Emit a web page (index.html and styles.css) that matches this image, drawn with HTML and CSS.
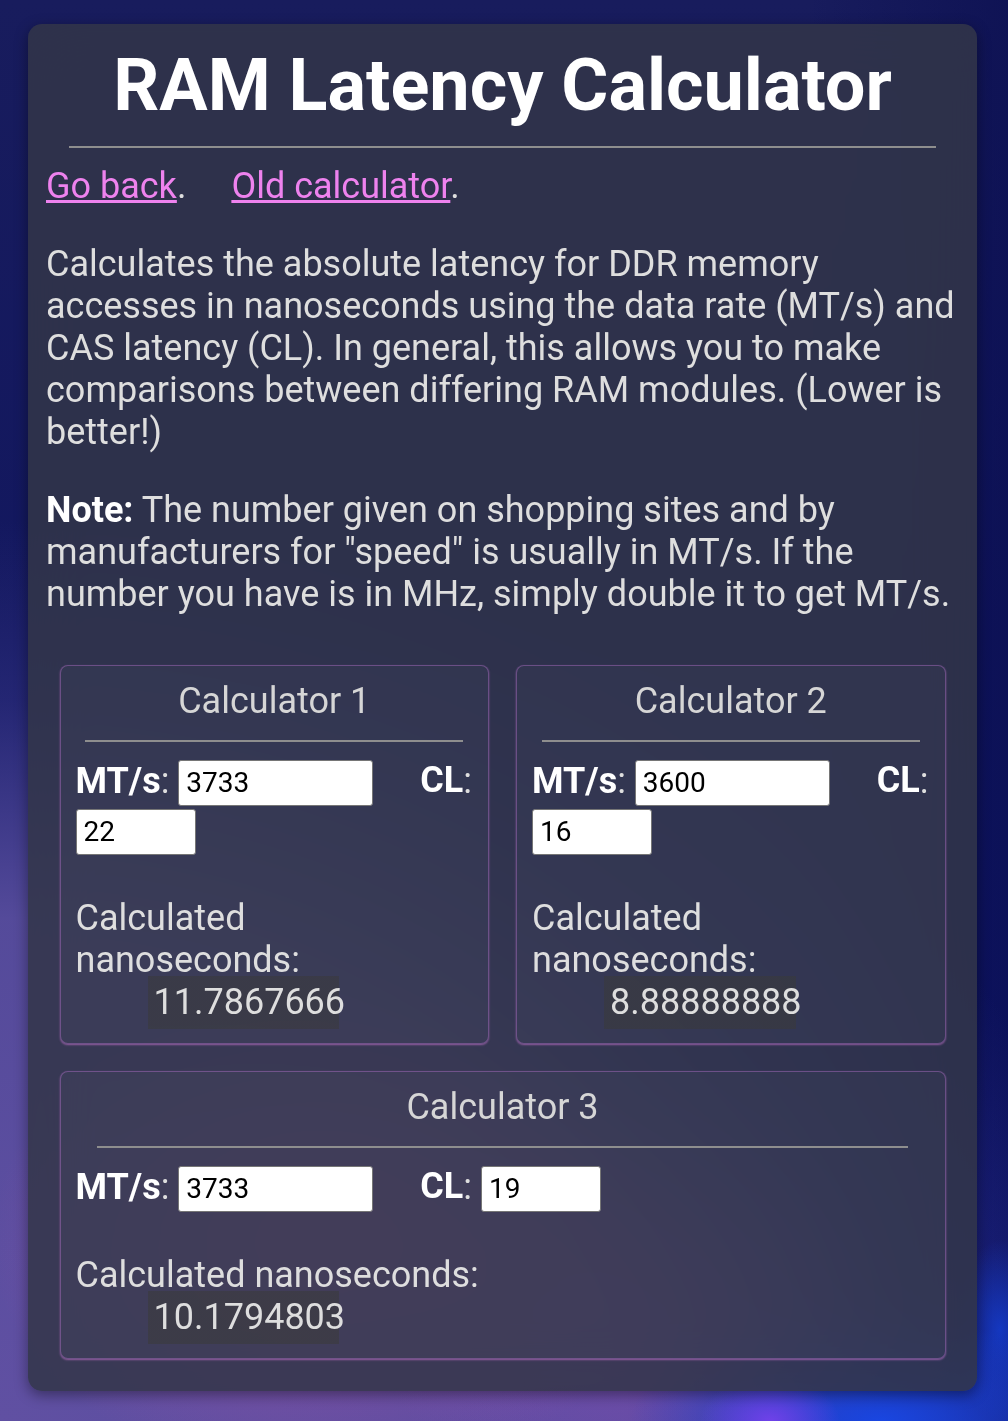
FILE: index.html
```html
<!DOCTYPE html>
<html lang="en">
<head>
<meta charset="utf-8">
<title>RAM Latency Calculator</title>
<link rel="stylesheet" href="styles.css">
</head>
<body>
<main class="card">
  <h1 class="title">RAM Latency Calculator</h1>
  <hr class="rule">
  <p class="links"><a href="#">Go back</a>.<span class="sep"></span><a href="#">Old calculator</a>.</p>
  <p class="text">Calculates the absolute latency for DDR memory accesses in nanoseconds using the data rate (MT/s) and CAS latency (CL). In general, this allows you to make comparisons between differing RAM modules. (Lower is better!)</p>
  <p class="text"><b>Note:</b> The number given on shopping sites and by manufacturers for "speed" is usually in MT/s. If the number you have is in MHz, simply double it to get MT/s.</p>
  <div class="calcs">
    <section class="calc">
      <h2 class="calc-title">Calculator 1</h2>
      <hr class="calc-rule">
      <div class="fields"><b>MT/s</b>: <input class="in-rate" type="text" value="3733"> <b class="cl">CL</b>: <input class="in-cl" type="text" value="22"></div>
      <div class="result">Calculated nanoseconds:<br><span class="ns">11.7867666</span></div>
    </section>
    <section class="calc">
      <h2 class="calc-title">Calculator 2</h2>
      <hr class="calc-rule">
      <div class="fields"><b>MT/s</b>: <input class="in-rate" type="text" value="3600"> <b class="cl">CL</b>: <input class="in-cl" type="text" value="16"></div>
      <div class="result">Calculated nanoseconds:<br><span class="ns">8.88888888</span></div>
    </section>
    <section class="calc calc-wide">
      <h2 class="calc-title">Calculator 3</h2>
      <hr class="calc-rule">
      <div class="fields"><b>MT/s</b>: <input class="in-rate" type="text" value="3733"> <b class="cl">CL</b>: <input class="in-cl" type="text" value="19"></div>
      <div class="result">Calculated nanoseconds:<br><span class="ns">10.1794803</span></div>
    </section>
  </div>
</main>
</body>
</html>
```

FILE: styles.css
```css
* {
  box-sizing: border-box;
}

html {
  min-height: 100%;
  background-color: #141a5e;
  background-image:
    radial-gradient(ellipse 70px 45px at 770px 1421px, rgba(115, 65, 235, 0.95), rgba(115, 65, 235, 0) 100%),
    radial-gradient(ellipse 250px 100px at 880px 1421px, rgba(25, 70, 225, 1), rgba(25, 70, 225, 0) 100%),
    radial-gradient(ellipse 45px 90px at 1000px 1330px, rgba(20, 60, 205, 0.85), rgba(20, 60, 205, 0) 100%),
    radial-gradient(ellipse 340px 240px at 330px 1240px, rgba(200, 85, 170, 0.5), rgba(200, 85, 170, 0) 100%),
    radial-gradient(ellipse 260px 220px at 640px 1320px, rgba(170, 80, 190, 0.4), rgba(170, 80, 190, 0) 100%),
    radial-gradient(ellipse 1250px 1000px at 0px 1421px, rgba(96, 80, 162, 1) 0%, rgba(92, 80, 160, 0.9) 50%, rgba(70, 66, 150, 0.35) 72%, rgba(60, 60, 150, 0) 90%),
    linear-gradient(90deg, rgba(8, 12, 80, 0) 80%, rgba(8, 12, 78, 0.55) 100%),
    linear-gradient(180deg, #181c5d 0%, #12175f 45%, #10176a 75%, #12209a 100%);
}

body {
  margin: 0;
  padding: 24px 31px 29px 28px;
  min-height: 1421px;
  font-family: Roboto, "Liberation Sans", sans-serif;
  font-size: 36px;
  line-height: normal;
  color: #dedede;
}

.card {
  padding: 18px 18px 19px;
  border-radius: 14px;
  background: rgba(50, 54, 72, 0.86);
  backdrop-filter: blur(28px);
  box-shadow: 0 4px 14px rgba(0, 0, 0, 0.4);
}

.title {
  margin: 1px 0 0;
  font-size: 72px;
  font-weight: 700;
  line-height: normal;
  color: #ffffff;
  text-align: center;
}

.rule {
  width: 95%;
  height: 0;
  margin: 18px auto 17px;
  border: 0;
  border-top: 2px solid #8e8e8e;
}

.links {
  margin: 0;
}

.links a {
  color: #ee82ee;
}

.sep {
  display: inline-block;
  width: 45px;
}

.text {
  margin: 36px 0 0;
}

.text b {
  color: #ffffff;
}

.calcs {
  display: grid;
  grid-template-columns: 1fr 1fr;
  gap: 27px;
  margin-top: 36px;
  padding: 13.5px;
}

.calc {
  padding: 14px 15px 20px;
  border: 1px solid rgba(175, 110, 200, 0.45);
  border-radius: 8px;
  background: rgba(255, 255, 255, 0.025);
  box-shadow: 0 1px 2px rgba(238, 130, 238, 0.5);
}

.calc-wide {
  grid-column: 1 / span 2;
}

.calc-title {
  margin: 0;
  font-size: 36px;
  font-weight: 400;
  line-height: normal;
  color: #d6d6d6;
  text-align: center;
}

.calc-rule {
  width: 95%;
  height: 0;
  margin: 18px auto;
  border: 0;
  border-top: 2px solid #8e8e8e;
}

.fields {
  line-height: 40px;
}

.fields b {
  color: #ffffff;
}

.fields .cl {
  margin-left: 38px;
}

.fields input {
  height: 46px;
  margin: 0 0 3px;
  padding: 0 7px;
  border: 1.5px solid #767676;
  border-radius: 3px;
  background: #ffffff;
  color: #000000;
  font-family: Roboto, "Liberation Sans", sans-serif;
  font-size: 28px;
  vertical-align: baseline;
}

.in-rate {
  width: 195px;
}

.in-cl {
  width: 120px;
}

.result {
  margin-top: 39px;
  color: #dedede;
}

.ns {
  margin-left: 72px;
  padding: 5px 0 6px 6px;
  background-image: linear-gradient(rgba(58, 58, 58, 0.55), rgba(58, 58, 58, 0.55));
  background-repeat: no-repeat;
  background-size: calc(100% - 6px) 100%;
}
```
